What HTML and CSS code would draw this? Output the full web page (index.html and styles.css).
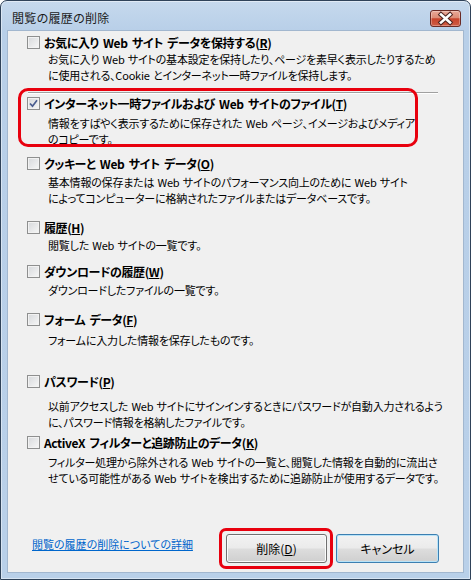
FILE: index.html
```html
<!DOCTYPE html>
<html lang="ja">
<head>
  <meta charset="UTF-8">
  <title>閲覧の履歴の削除</title>
  <link rel="stylesheet" href="styles.css">
</head>
<body>
  <div class="window">
    <div class="titlebar">
      <span class="title">閲覧の履歴の削除</span>
      <span class="close">
        <svg width="29" height="15" viewBox="0 0 29 15">
          <path d="M10 3.5 L19 11.5 M19 3.5 L10 11.5" stroke="#4b2420" stroke-width="4.6" stroke-linecap="square" fill="none"/>
          <path d="M10 3.5 L19 11.5 M19 3.5 L10 11.5" stroke="#ffffff" stroke-width="2.6" stroke-linecap="square" fill="none"/>
        </svg>
      </span>
    </div>

    <div class="client">
      <!-- お気に入り -->
      <div class="option opt-fav">
        <div class="head"><span class="check"></span>お気に入り Web サイト データを保持する(<u>R</u>)</div>
        <p class="desc">お気に入り Web サイトの基本設定を保持したり、ページを素早く表示したりするため<br>に使用される、Cookie とインターネット一時ファイルを保持します。</p>
      </div>

      <hr class="sep">

      <!-- インターネット一時ファイル -->
      <div class="option opt-temp marked">
        <div class="head">
          <span class="check checked">
            <svg width="11" height="11" viewBox="0 0 11 11"><path d="M2 5.5 L4.5 8.2 L9 2.2" stroke="#4a5d8f" stroke-width="1.7" fill="none"/></svg>
          </span>インターネット一時ファイルおよび Web サイトのファイル(<u>T</u>)
        </div>
        <p class="desc">情報をすばやく表示するために保存された Web ページ、イメージおよびメディア<br>のコピーです。</p>
      </div>

      <!-- クッキー -->
      <div class="option opt-cookie">
        <div class="head"><span class="check"></span>クッキーと Web サイト データ(<u>O</u>)</div>
        <p class="desc">基本情報の保存または Web サイトのパフォーマンス向上のために Web サイト<br>によってコンピューターに格納されたファイルまたはデータベースです。</p>
      </div>

      <!-- 履歴 -->
      <div class="option opt-history">
        <div class="head"><span class="check"></span>履歴(<u>H</u>)</div>
        <p class="desc">閲覧した Web サイトの一覧です。</p>
      </div>

      <!-- ダウンロード -->
      <div class="option opt-download">
        <div class="head"><span class="check"></span>ダウンロードの履歴(<u>W</u>)</div>
        <p class="desc">ダウンロードしたファイルの一覧です。</p>
      </div>

      <!-- フォーム -->
      <div class="option opt-form">
        <div class="head"><span class="check"></span>フォーム データ(<u>F</u>)</div>
        <p class="desc">フォームに入力した情報を保存したものです。</p>
      </div>

      <!-- パスワード -->
      <div class="option opt-password">
        <div class="head"><span class="check"></span>パスワード(<u>P</u>)</div>
        <p class="desc">以前アクセスした Web サイトにサインインするときにパスワードが自動入力されるよう<br>に、パスワード情報を格納したファイルです。</p>
      </div>

      <!-- ActiveX -->
      <div class="option opt-activex">
        <div class="head"><span class="check"></span>ActiveX フィルターと追跡防止のデータ(<u>K</u>)</div>
        <p class="desc">フィルター処理から除外される Web サイトの一覧と、閲覧した情報を自動的に流出さ<br>せている可能性がある Web サイトを検出するために追跡防止が使用するデータです。</p>
      </div>

      <div class="footer">
        <a href="#" class="more">閲覧の履歴の削除についての詳細</a>
        <div class="buttons">
          <button class="btn marked-btn">削除(<u>D</u>)</button>
          <button class="btn default">キャンセル</button>
        </div>
      </div>
    </div>
  </div>
</body>
</html>
```

FILE: styles.css
```css
body {
  margin: 0;
  font-family: "Noto Sans CJK JP", sans-serif;
  font-size: 12px;
  font-feature-settings: "palt";
  color: #000;
  background: #fff;
}
.window {
  width: 471px;
  height: 580px;
  box-sizing: border-box;
  border: 1px solid #2f4259;
  border-radius: 7px 7px 0 0;
  background: linear-gradient(#c6d9ed, #b8cfe8 30px, #b9d0e9);
  box-shadow: inset 0 0 0 1px rgba(255,255,255,0.45);
  padding: 0 7px 7px;
  display: flex;
  flex-direction: column;
}
.titlebar {
  height: 30px;
  display: flex;
  align-items: flex-start;
  justify-content: space-between;
  padding-left: 4px;
}
.title {
  margin-top: 9px;
  line-height: 16px;
  color: #1a1a1a;
  letter-spacing: 0.3px;
}
.close {
  margin-top: 9px;
  margin-right: 2px;
  width: 29px;
  height: 15px;
  border: 1px solid #6a2b25;
  border-radius: 3px;
  background: linear-gradient(#e9a898, #dc8c76 45%, #c7432b 52%, #cf5d45);
  box-shadow: inset 0 0 0 1px rgba(255,255,255,0.3);
  display: flex;
}
.client {
  flex: 1;
  background: #f0f0f0;
  box-shadow: 0 0 0 1px #a2b7cf;
  display: flex;
  flex-direction: column;
  padding-top: 3px;
}
.option {
  position: relative;
}
.head {
  display: flex;
  align-items: center;
  height: 16px;
  padding-left: 19px;
  font-weight: bold;
  letter-spacing: -0.4px;
  word-spacing: 2px;
  white-space: nowrap;
}
.check {
  width: 11px;
  height: 11px;
  margin-right: 4px;
  border: 1px solid #8e8f8f;
  background: linear-gradient(135deg, #d6d8db, #f7f7f7);
  box-shadow: inset 0 0 0 1px #f2f2f2;
  display: flex;
  flex: none;
}
.desc {
  margin: 3px 0 0 40px;
  font-size: 11px;
  line-height: 16px;
  letter-spacing: -0.2px;
  word-spacing: 1px;
  white-space: nowrap;
  color: #000;
}
u {
  text-decoration: underline;
  text-underline-offset: 1px;
}

/* 各項目の間隔 (元のダイアログに合わせて個別に調整) */
.opt-fav .desc { margin-top: 1px; }
.sep {
  border: 0;
  height: 1px;
  width: 410px;
  background: #a0a0a0;
  box-shadow: 0 1px 0 #fff;
  margin: 9px 0 0 20px;
}
.opt-temp { margin-top: 2px; }
.opt-temp .desc { margin-top: 4px; }
.opt-cookie { margin-top: 8px; }
.opt-history { margin-top: 13px; }
.opt-history .desc { margin-top: 2px; }
.opt-download { margin-top: 10px; }
.opt-form { margin-top: 13px; }
.opt-form .desc { margin-top: 5px; }
.opt-password { margin-top: 25px; }
.opt-password .desc { margin-top: 9px; }
.opt-activex { margin-top: 4px; }
.opt-activex .desc { margin-top: 4px; }

/* 赤い囲み */
.marked::before {
  content: "";
  position: absolute;
  left: 10px;
  top: -7px;
  width: 400px;
  height: 59px;
  box-sizing: border-box;
  border: 3px solid #e8000e;
  border-radius: 10px;
}

.footer {
  margin-top: auto;
  display: flex;
  justify-content: space-between;
  align-items: flex-start;
  padding: 0 24px 9px 24px;
}
.more {
  margin-top: 2px;
  font-size: 11px;
  line-height: 16px;
  color: #0066cc;
  text-decoration: underline;
}
.buttons {
  display: flex;
  gap: 9px;
}
.btn {
  position: relative;
  width: 101px;
  height: 29px;
  padding: 0;
  font: inherit;
  color: #000;
  border: 1px solid #707070;
  border-radius: 3px;
  background: linear-gradient(#f2f2f2, #ebebeb 48%, #dddddd 52%, #cfcfcf);
  box-shadow: inset 0 0 0 1px #fbfbfb;
}
.btn.default {
  width: 103px;
  border-color: #3c7fb1;
  box-shadow: inset 0 0 0 1px #b8e3f8;
}
.marked-btn::before {
  content: "";
  position: absolute;
  left: -8px;
  top: -7px;
  width: 114px;
  height: 41px;
  box-sizing: border-box;
  border: 3px solid #e8000e;
  border-radius: 7px;
}
```
